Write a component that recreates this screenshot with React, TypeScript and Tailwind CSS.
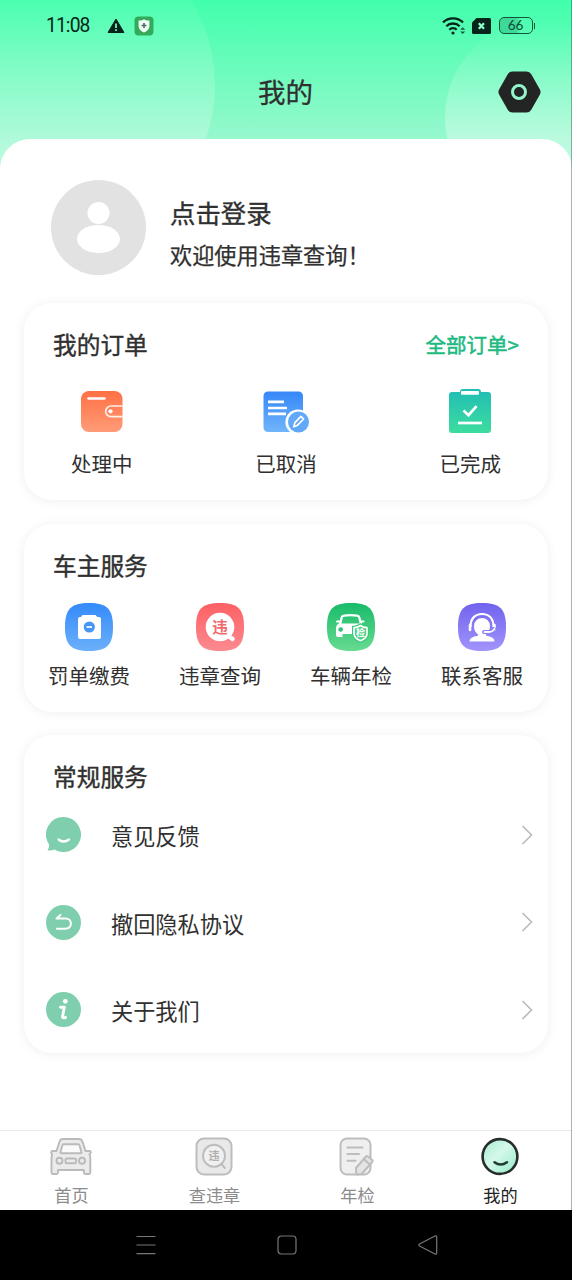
import type { ReactNode } from 'react';

interface ItemProps {
  icon: ReactNode;
  label: string;
}

const cjk = 'Noto Sans CJK SC';

function StatusBar() {
  return (
    <div className="flex h-[52px] items-center pl-[46px] pr-[37px] text-[#06251a]">
      <span className="w-[61px] font-['Roboto',sans-serif] text-[19.3px] leading-none tracking-[-0.9px]">11:08</span>
      <svg className="h-[18px] w-[18px]" viewBox="0 0 18 18">
        <path d="M9 2 17 15.5H1Z" fill="#06251a" stroke="#06251a" strokeWidth="1" strokeLinejoin="round" />
        <path d="M9 6.5v4.5M9 12.3v1.7" stroke="#70f5b8" strokeWidth="1.8" />
      </svg>
      <svg className="-mt-px ml-[9px] h-5 w-5" viewBox="0 0 20 20">
        <rect x="0.5" y="0.5" width="19" height="19" rx="4" fill="#35a95c" />
        <path d="M10 3.2c2 1.2 3.8 1.4 5.4 1.4v5.6c0 3-2.5 5-5.4 6.4-2.9-1.4-5.4-3.4-5.4-6.4V4.6c1.6 0 3.4-.2 5.4-1.4Z" fill="#f0fff5" />
        <path d="M10 7v5M7.5 9.5h5" stroke="#4a6c5e" strokeWidth="1.6" />
      </svg>
      <div className="-mt-px ml-auto flex items-center">
        <svg className="h-[20px] w-[24px]" viewBox="0 0 24 20" fill="none" stroke="#06251a">
          <path d="M1 6.3a14.5 14.5 0 0 1 20 0" strokeWidth="2.3" />
          <path d="M4.3 10.2a9.6 9.6 0 0 1 13.4 0" strokeWidth="2.3" />
          <path d="M7.3 13.7a5.2 5.2 0 0 1 7.4 0" strokeWidth="2.2" />
          <circle cx="11" cy="17" r="1.6" fill="#06251a" stroke="none" />
          <path d="m18.2 13.8 2.5-2.5 2.5 2.5ZM18.2 15.5l2.5 2.500 2.5-2.500Z" fill="#115c3e" stroke="none" />
        </svg>
        <svg className="ml-[6px] h-[16px] w-[19px]" viewBox="0 0 19 16">
          <path d="M4.500 0H17.500q1.500 0 1.500 1.500v13q0 1.500-1.500 1.500h-16q-1.500 0-1.500-1.500V4.500Z" fill="#06251a" />
          <path d="m6.800 5.200 5.200 5.600m0-5.600-5.200 5.600" stroke="#8affcb" strokeWidth="2.200" />
        </svg>
        <div className="ml-[8px] flex h-[17px] w-[34px] items-center justify-center rounded-[5px] border-[1.5px] border-[#12553a] bg-[linear-gradient(90deg,#3ed998_50%,transparent_66%)] font-['Lato',sans-serif] text-[13.5px] leading-none text-[#0d4c34]">
          66
        </div>
        <div className="ml-[1px] h-[6px] w-[1.5px] bg-[#12553a]" />
      </div>
    </div>
  );
}

function WalletIcon() {
  return (
    <svg className="h-[46px] w-[50px]" viewBox="0 0 50 46">
      <defs>
        <linearGradient id="wallet" x1="0" y1="0" x2="0" y2="1">
          <stop stopColor="#ff7044" />
          <stop offset="1" stopColor="#ff9c78" />
        </linearGradient>
      </defs>
      <rect x="4" y="3" width="41.5" height="41" rx="8" fill="url(#wallet)" />
      <path d="M11.5 10.500h16" stroke="#fff" strokeWidth="2.400" strokeLinecap="round" />
      <path d="M45.500 18H34a5.300 5.300 0 0 0 0 10.600h11.500" fill="none" stroke="#fff0e9" strokeWidth="1.700" />
      <circle cx="33.500" cy="23.300" r="2.100" fill="#fff" />
    </svg>
  );
}

function CancelIcon() {
  return (
    <svg className="h-[46px] w-[50px]" viewBox="0 0 50 46">
      <defs>
        <linearGradient id="cancel" x1="0" y1="0" x2="0" y2="1">
          <stop stopColor="#3687f8" />
          <stop offset="1" stopColor="#70b5fb" />
        </linearGradient>
      </defs>
      <rect x="2.500" y="3.500" width="39.500" height="40.500" rx="4.500" fill="url(#cancel)" />
      <path d="M7 13.800h16M7 20h19M7 25.800h18" stroke="#fff" strokeWidth="2.700" />
      <circle cx="37" cy="34" r="12.600" fill="#fff" />
      <circle cx="37.500" cy="34" r="10.500" fill="#61a9f8" />
      <path d="m32.800 38.700 1.100-4.100 6-6.200 2.700 2.600-6 6.200Z" fill="none" stroke="#fff" strokeWidth="1.700" strokeLinejoin="round" />
    </svg>
  );
}

function DoneIcon() {
  return (
    <svg className="h-[46px] w-[50px]" viewBox="0 0 50 46">
      <defs>
        <linearGradient id="done" x1="0" y1="0" x2="0" y2="1">
          <stop stopColor="#20bdb4" />
          <stop offset="1" stopColor="#3ddd9f" />
        </linearGradient>
      </defs>
      <path d="M7 4h8q0-3 3-3h15q3 0 3 3h7q3 0 3 3v35q0 3-3 3H7q-3 0-3-3V7q0-3 3-3Z" fill="url(#done)" />
      <rect x="16" y="3" width="18" height="3.800" rx="1" fill="#fff" />
      <path d="m18.500 22.500 5 4.700 8-9" fill="none" stroke="#fff" strokeWidth="2.700" />
      <path d="M13 35h24" stroke="#fff" strokeWidth="2.700" />
    </svg>
  );
}

const tile = 'M24 0C42 0 48 6 48 24S42 48 24 48 0 42 0 24 6 0 24 0Z';

function TicketIcon() {
  return (
    <svg className="h-12 w-12" viewBox="0 0 48 48">
      <defs>
        <linearGradient id="ticket" x1="0" y1="0" x2="0" y2="1">
          <stop stopColor="#348af9" />
          <stop offset="1" stopColor="#6bb0fb" />
        </linearGradient>
      </defs>
      <path d={tile} fill="url(#ticket)" />
      <path d="M17.500 12h13l1.800 2H34q2 0 2 2v18q0 2-2 2H15q-2 0-2-2V16q0-2 2-2h1Z" fill="#fff" />
      <circle cx="24.300" cy="24" r="5.600" fill="#4696f8" />
      <path d="M21.600 24H27" stroke="#fff" strokeWidth="1.700" />
    </svg>
  );
}

function ViolationIcon() {
  return (
    <svg className="h-12 w-12" viewBox="0 0 48 48">
      <defs>
        <linearGradient id="violation" x1="0" y1="0" x2="0" y2="1">
          <stop stopColor="#fd6064" />
          <stop offset="1" stopColor="#fb8a90" />
        </linearGradient>
      </defs>
      <path d={tile} fill="url(#violation)" />
      <circle cx="24" cy="24" r="14.300" fill="#fff" />
      <path d="m32.500 33 4 3" stroke="#fff" strokeWidth="4.500" strokeLinecap="round" />
      <text x="24" y="29.500" textAnchor="middle" fontFamily={cjk} fontWeight="700" fontSize="15.500" fill="#f2686b">违</text>
    </svg>
  );
}

function InspectIcon() {
  return (
    <svg className="h-12 w-12" viewBox="0 0 48 48">
      <defs>
        <linearGradient id="inspect" x1="0" y1="0" x2="0" y2="1">
          <stop stopColor="#18bb6b" />
          <stop offset="1" stopColor="#67db90" />
        </linearGradient>
      </defs>
      <path d={tile} fill="url(#inspect)" />
      <path d="m13 21.500 1.700-7q.5-1.800 2.300-1.900 6.500-.8 13 0 1.800.1 2.300 1.900l1.700 7" fill="none" stroke="#fff" strokeWidth="2.300" />
      <path d="M9 26q0-5.500 4-5.500h19q4.500 0 4.500 5.500v5H15.500v3H11q-2 0-2-2Z" fill="#fff" />
      <path d="M10 18.500h3M34 18.500h2.500" stroke="#fff" strokeWidth="2" strokeLinecap="round" />
      <circle cx="13.700" cy="26.500" r="2.300" fill="#2bc277" />
      <path d="M33.500 22.500q3 2 6.500 2.200v6q0 4.300-6.500 7-6.500-2.700-6.500-7v-6q3.500-.2 6.500-2.200Z" fill="none" stroke="#38c77c" strokeWidth="4" />
      <path d="M33.500 22.500q3 2 6.500 2.200v6q0 4.300-6.500 7-6.500-2.700-6.500-7v-6q3.500-.2 6.500-2.200Z" fill="#50d087" stroke="#fff" strokeWidth="1.700" strokeLinejoin="round" />
      <text x="33.500" y="33.300" textAnchor="middle" fontFamily={cjk} fontWeight="700" fontSize="9" fill="#fff">检</text>
    </svg>
  );
}

function SupportIcon() {
  return (
    <svg className="h-12 w-12" viewBox="0 0 48 48">
      <defs>
        <linearGradient id="support" x1="0" y1="0" x2="0" y2="1">
          <stop stopColor="#7163ee" />
          <stop offset="1" stopColor="#a194fb" />
        </linearGradient>
      </defs>
      <path d={tile} fill="url(#support)" />
      <path d="M12.500 24C12.500 15.500 17 11 24 11s11.500 4.500 11.500 13" fill="none" stroke="#fff" strokeWidth="2.200" />
      <path d="M12 22v5M36.500 22v5" stroke="#fff" strokeWidth="2.600" strokeLinecap="round" />
      <path d="M16 23a8 8 0 1 1 16 0q0 5.500-4 8.500v1.300q8.500.9 8.500 5.700h-25q0-4.800 8.500-5.700v-1.300Q16 28.500 16 23Z" fill="#fff" />
      <path d="M36 26q-1.500 3-5 3h-5" fill="none" stroke="#8a7ef4" strokeWidth="4" strokeLinecap="round" />
      <path d="M36.500 25.500q-1.500 3.500-5.500 3.500h-4.500" fill="none" stroke="#fff" strokeWidth="1.800" strokeLinecap="round" />
    </svg>
  );
}

function FeedbackIcon() {
  return (
    <svg className="h-[35px] w-[35px]" viewBox="0 0 35 35">
      <path d="M17.500 0a17.500 17.500 0 1 1-9 32.500Q5.500 34 1.500 33.300q2-2.300 1.500-6A17.500 17.500 0 0 1 17.500 0Z" fill="#7fcfae" />
      <path d="M12.500 22.500q5 4 10.500 0" fill="none" stroke="#fff" strokeWidth="2.300" strokeLinecap="round" />
    </svg>
  );
}

function RevokeIcon() {
  return (
    <svg className="h-[35px] w-[35px]" viewBox="0 0 35 35" fill="none">
      <circle cx="17.500" cy="17.500" r="17.500" fill="#7fcfae" />
      <path d="m14.500 10-4 3.500h9.300a5 5 0 0 1 0 10.200h-8.800" stroke="#fff" strokeWidth="2" strokeLinecap="round" strokeLinejoin="round" />
    </svg>
  );
}

function AboutIcon() {
  return (
    <svg className="h-[35px] w-[35px]" viewBox="0 0 35 35" fill="none">
      <circle cx="17.500" cy="17.500" r="17.500" fill="#7fcfae" />
      <circle cx="19.300" cy="9.300" r="2.400" fill="#fff" />
      <path d="M14.500 15.200h3.800l-1.700 9.300q-.3 2 2.900 1" stroke="#fff" strokeWidth="2.900" strokeLinecap="round" strokeLinejoin="round" />
    </svg>
  );
}

function HomeTabIcon() {
  return (
    <svg className="-ml-px h-10 w-[44px]" viewBox="0 0 44 40" fill="#ebebeb" stroke="#bababa" strokeWidth="1.900" strokeLinejoin="round">
      <path d="m7.500 14 3-9.300Q11.300 2 14 2h16q2.700 0 3.500 2.700l3 9.300H41q2 1-.5 3.300.8 1.400.8 4.200v14q0 1.500-1.500 1.500h-3.500q-1.500 0-1.500-1.500V33H9v2.500Q9 37 7.500 37H4q-1.500 0-1.500-1.500v-14q0-2.800.8-4.200Q1 15 3 14Z" />
      <path d="m13 9.500.6-1.500q.3-.8 1.200-.8h14.400q.9 0 1.200.8l2 7q.4 1.200-.9 1.200H12.500q-1.300 0-.9-1.200Z" fill="#fafafa" />
      <circle cx="10.500" cy="23.800" r="3" />
      <circle cx="33" cy="23.800" r="3" />
      <rect x="16.500" y="21.500" width="10.500" height="4.800" rx="1" />
    </svg>
  );
}

function QueryTabIcon() {
  return (
    <svg className="-ml-px h-10 w-[44px]" viewBox="0 0 44 40" fill="none" stroke="#bdbdbd" strokeWidth="2">
      <rect x="4.500" y="1.500" width="35" height="36" rx="7.500" fill="#e9e9e9" />
      <circle cx="22" cy="18.800" r="11" fill="#f0f0f0" />
      <path d="m29.500 27 3.300 4" strokeLinecap="round" />
      <text x="22" y="23" textAnchor="middle" fontFamily={cjk} fontWeight="700" fontSize="11" fill="#b0b0b0" stroke="none">违</text>
    </svg>
  );
}

function YearTabIcon() {
  return (
    <svg className="-ml-px h-10 w-[44px]" viewBox="0 0 44 40" fill="none" stroke="#bdbdbd" strokeWidth="2" strokeLinecap="round" strokeLinejoin="round">
      <rect x="5.500" y="1.500" width="30" height="36" rx="6.500" fill="#efefef" />
      <path d="M12.500 10.500h15M12.500 17h11.500M12.500 23.800h8" />
      <path d="m21 31 10-11.500q1-1 2 0l4.200 3.500q1 .9 0 2L27.500 36q-.5.700-1.500.9l-4 .6q-.8 0-.8-.8Z" fill="#e4e4e4" />
      <path d="m29.300 22.500 5 4.400" />
    </svg>
  );
}

function MineTabIcon() {
  return (
    <svg className="-ml-px h-10 w-[44px]" viewBox="0 0 44 40" fill="none">
      <defs>
        <linearGradient id="mine" x1="0" y1="0" x2="1" y2="1">
          <stop stopColor="#a0edcf" />
          <stop offset="0.45" stopColor="#d5f8ea" />
          <stop offset="1" stopColor="#91ecc7" />
        </linearGradient>
      </defs>
      <circle cx="22" cy="19.500" r="17.400" fill="url(#mine)" stroke="#262d2b" strokeWidth="2.600" />
      <path d="M16.500 25.200q6 4.600 12.500 0" stroke="#203b31" strokeWidth="2.500" strokeLinecap="round" />
    </svg>
  );
}

function OrderItem({ icon, label }: ItemProps) {
  return (
    <button className="flex flex-col items-center">
      {icon}
      <span className="mt-[14px] text-[20.5px] leading-[30px]">{label}</span>
    </button>
  );
}

function ServiceItem({ icon, label }: ItemProps) {
  return (
    <button className="-ml-px flex flex-col items-center">
      {icon}
      <span className="mt-[9px] text-[20.5px] leading-[30px]">{label}</span>
    </button>
  );
}

function MenuRow({ icon, label }: ItemProps) {
  return (
    <button className="flex h-[87.5px] w-full items-center pl-[22px] pr-[15px]">
      {icon}
      <span className="ml-[30px] pt-px text-[22.2px] leading-8">{label}</span>
      <svg className="ml-auto h-[20px] w-[12px]" viewBox="0 0 12 20" fill="none">
        <path d="m1.500 1 9 9-9 9" stroke="#bcbcbc" strokeWidth="1.700" />
      </svg>
    </button>
  );
}

const card = 'rounded-[28px] bg-white shadow-[0_1px_12px_rgba(0,0,0,0.065)]';
const cardTitle = 'text-[23.7px] leading-9 [-webkit-text-stroke:0.4px_currentColor]';

export default function App() {
  return (
    <div className="relative flex h-[1280px] w-[572px] flex-col overflow-hidden bg-white font-['Noto_Sans_CJK_SC',sans-serif] text-[#303030]">
      {/* Header */}
      <header className="relative h-[176px] shrink-0 overflow-hidden bg-[linear-gradient(180deg,#41ffac_0%,#98f8ce_80%,#a8fad7_100%)]">
        <div className="absolute left-[-109px] top-[-77px] h-[324px] w-[324px] rounded-full bg-[linear-gradient(180deg,rgba(255,255,255,0.04)_20%,rgba(255,255,255,0.27)_75%)]" />
        <div className="absolute left-[445px] top-[20px] h-[194px] w-[194px] rounded-full bg-[linear-gradient(180deg,rgba(255,255,255,0)_2%,rgba(255,255,255,0.34)_62%)]" />
        <div className="relative">
          <StatusBar />
          <div className="flex h-[80px] items-center justify-end pr-[31px]">
            <h1 className="-mt-[2px] w-[283px] text-[27.5px] leading-10 [-webkit-text-stroke:0.3px_currentColor]">我的</h1>
            <svg className="-ml-11 -mt-px h-[44px] w-[44px]" viewBox="0 0 44 44">
              <path d="M15.500 6.500h14L36.500 22 29.500 37.500h-14L6.500 22Z" fill="none" />
              <path d="M15.500 7h14L38 22l-8.500 15h-14L7 22Z" fill="#222524" stroke="#222524" strokeWidth="11" strokeLinejoin="round" />
              <circle cx="22" cy="22" r="6.500" fill="none" stroke="#92f5cb" strokeWidth="3" />
            </svg>
          </div>
        </div>
      </header>

      {/* Content sheet */}
      <main className="relative -mt-[37px] flex-1 rounded-t-[30px] bg-white px-6 pt-[41px]">
        <div className="flex h-[96px] items-center pl-[27px]">
          <svg className="h-[96px] w-[96px]" viewBox="0 0 96 96">
            <circle cx="47.500" cy="47.500" r="47.500" fill="#e2e2e2" />
            <circle cx="47.500" cy="33" r="11" fill="#fff" />
            <ellipse cx="47.500" cy="59" rx="21.500" ry="14" fill="#fff" />
          </svg>
          <div className="ml-[23px] pt-[7px]">
            <p className="text-[25.4px] leading-[38px] [-webkit-text-stroke:0.4px_currentColor]">点击登录</p>
            <p className="mt-[6px] text-[22.2px] leading-[34px] [-webkit-text-stroke:0.25px_currentColor]">欢迎使用违章查询！</p>
          </div>
        </div>

        <section className={`mt-[27px] h-[197px] pt-[23px] ${card}`}>
          <div className="flex items-center justify-between pl-[29px] pr-[29px]">
            <h2 className={cardTitle}>我的订单</h2>
            <button className="text-[20.5px] leading-9 text-[#20b982] [-webkit-text-stroke:0.5px_currentColor]">全部订单&gt;</button>
          </div>
          <div className="mt-[26px] flex justify-between px-[47px]">
            <OrderItem icon={<WalletIcon />} label="处理中" />
            <OrderItem icon={<CancelIcon />} label="已取消" />
            <OrderItem icon={<DoneIcon />} label="已完成" />
          </div>
        </section>

        <section className={`mt-[24px] h-[188px] pt-[23px] ${card}`}>
          <h2 className={`pl-[29px] ${cardTitle}`}>车主服务</h2>
          <div className="mt-[20px] grid grid-cols-4">
            <ServiceItem icon={<TicketIcon />} label="罚单缴费" />
            <ServiceItem icon={<ViolationIcon />} label="违章查询" />
            <ServiceItem icon={<InspectIcon />} label="车辆年检" />
            <ServiceItem icon={<SupportIcon />} label="联系客服" />
          </div>
        </section>

        <section className={`mt-[23px] h-[318px] pt-[23px] ${card}`}>
          <h2 className={`pl-[29px] ${cardTitle}`}>常规服务</h2>
          <div className="-mt-[3px]">
            <MenuRow icon={<FeedbackIcon />} label="意见反馈" />
            <MenuRow icon={<RevokeIcon />} label="撤回隐私协议" />
            <MenuRow icon={<AboutIcon />} label="关于我们" />
          </div>
        </section>
      </main>

      {/* Tab bar */}
      <nav className="relative grid h-[80px] shrink-0 grid-cols-4 border-t border-[#e9e9e9] bg-white pt-[6px] text-[17.2px] leading-6 text-[#8c8c8c]">
        <button className="flex flex-col items-center">
          <HomeTabIcon />
          <span className="mt-[6px]">首页</span>
        </button>
        <button className="flex flex-col items-center">
          <QueryTabIcon />
          <span className="mt-[6px]">查违章</span>
        </button>
        <button className="flex flex-col items-center">
          <YearTabIcon />
          <span className="mt-[6px]">年检</span>
        </button>
        <button className="flex flex-col items-center text-[#222]">
          <MineTabIcon />
          <span className="mt-[6px]">我的</span>
        </button>
      </nav>

      {/* System navigation */}
      <div className="flex h-[70px] shrink-0 items-center justify-between bg-black pl-[136px] pr-[134px]">
        <svg className="h-5 w-5" viewBox="0 0 20 20" stroke="#777" strokeWidth="1.200">
          <path d="M.5 1.500h19M.5 10h19M.5 18.700h19" />
        </svg>
        <svg className="h-5 w-5" viewBox="0 0 20 20" fill="none" stroke="#777" strokeWidth="1.200">
          <rect x="1" y="1" width="18" height="18" rx="3.500" />
        </svg>
        <svg className="h-5 w-5" viewBox="0 0 20 20" fill="none" stroke="#777" strokeWidth="1.200" strokeLinejoin="round">
          <path d="M1.500 9 17 1q1.700-.7 1.700 1v16q0 1.700-1.700 1L1.500 11q-1.300-1 0-2Z" />
        </svg>
      </div>

      <div className="absolute right-0 top-0 h-[1210px] w-px bg-black/30" />
    </div>
  );
}
